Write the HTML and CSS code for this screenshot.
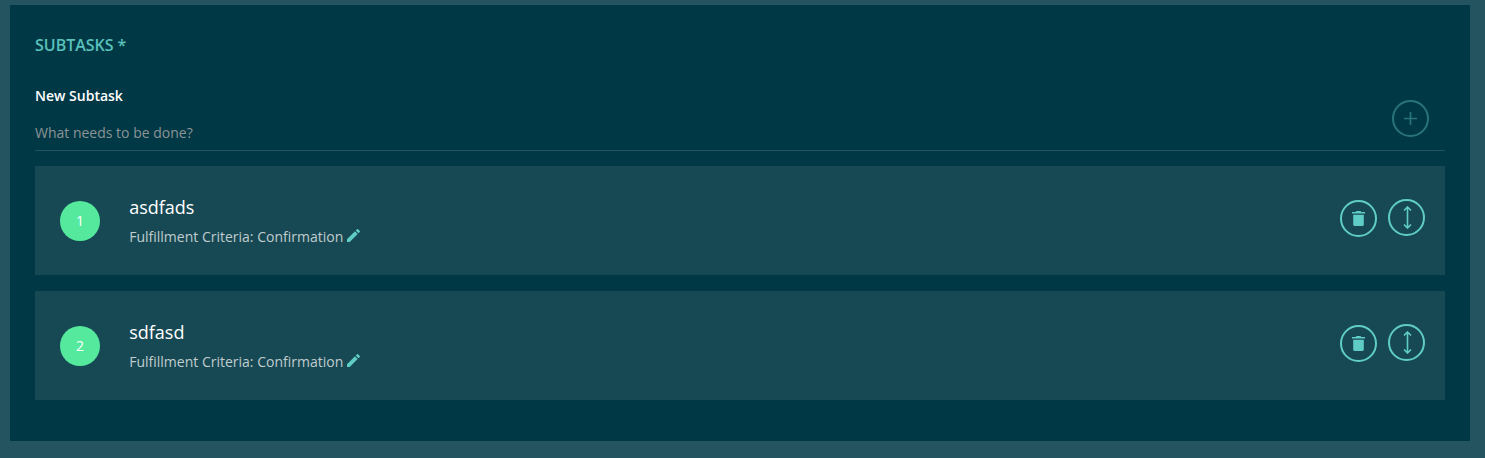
FILE: index.html
```html
<!DOCTYPE html>
<html lang="en">
<head>
<meta charset="utf-8">
<title>Subtasks</title>
<link rel="stylesheet" href="styles.css">
</head>
<body>
<main class="panel">
  <h2 class="title">SUBTASKS *</h2>
  <div class="new-task">
    <div class="field">
      <label class="label" for="new">New Subtask</label>
      <input class="input" id="new" type="text" placeholder="What needs to be done?">
    </div>
    <button class="round add" aria-label="Add"><svg width="13" height="13" viewBox="0 0 13 13"><path d="M6.500 0v13M0 6.500h13" stroke="currentColor" stroke-width="1.7"/></svg></button>
  </div>
  <section class="card">
    <span class="number">1</span>
    <div class="info">
      <div class="name">asdfads</div>
      <div class="criteria">Fulfillment Criteria: Confirmation<svg class="pencil" viewBox="3 3 18 18"><path d="M3 17.25V21h3.75L17.81 9.94l-3.75-3.75L3 17.25zM20.71 7.04a1 1 0 0 0 0-1.41l-2.34-2.34a1 1 0 0 0-1.41 0l-1.83 1.83 3.75 3.75 1.83-1.83z"/></svg></div>
    </div>
    <button class="round trash" aria-label="Delete"><svg width="13" height="15" viewBox="0 0 13 15"><path d="M4.500 0h4l.8 1H13v1.500H0V1h3.700zM1.200 3.700h10.600V13.500q0 1.500-1.500 1.500H2.700q-1.500 0-1.500-1.500z" fill="currentColor"/></svg></button>
    <button class="round move" aria-label="Move"><svg width="9" height="23" viewBox="0 0 9 23"><path d="M4.500 1v21M1 4.500L4.500 1 8 4.500M1 18.500L4.500 22 8 18.500" fill="none" stroke="currentColor" stroke-width="1.6"/></svg></button>
  </section>
  <section class="card">
    <span class="number">2</span>
    <div class="info">
      <div class="name">sdfasd</div>
      <div class="criteria">Fulfillment Criteria: Confirmation<svg class="pencil" viewBox="3 3 18 18"><path d="M3 17.25V21h3.75L17.81 9.94l-3.75-3.75L3 17.25zM20.71 7.04a1 1 0 0 0 0-1.41l-2.34-2.34a1 1 0 0 0-1.41 0l-1.83 1.83 3.75 3.75 1.83-1.83z"/></svg></div>
    </div>
    <button class="round trash" aria-label="Delete"><svg width="13" height="15" viewBox="0 0 13 15"><path d="M4.500 0h4l.8 1H13v1.500H0V1h3.700zM1.200 3.700h10.600V13.500q0 1.500-1.500 1.500H2.700q-1.500 0-1.500-1.500z" fill="currentColor"/></svg></button>
    <button class="round move" aria-label="Move"><svg width="9" height="23" viewBox="0 0 9 23"><path d="M4.500 1v21M1 4.500L4.500 1 8 4.500M1 18.500L4.500 22 8 18.500" fill="none" stroke="currentColor" stroke-width="1.6"/></svg></button>
  </section>
</main>
</body>
</html>
```
FILE: styles.css
```css
* { box-sizing: border-box; }
body {
  margin: 0;
  height: 458px;
  padding: 5px 15px 0 10px;
  overflow: hidden;
  background: #24545f;
  font-family: "Open Sans", "Noto Sans", sans-serif;
}
.panel {
  height: 436px;
  padding: 28px 25px 0;
  background: #013846;
}
.title {
  margin: 0;
  font-size: 16px;
  line-height: 24px;
  font-weight: 600;
  letter-spacing: -0.02px;
  color: #58c1ba;
}
.new-task {
  display: flex;
  height: 70px;
  margin: 24px 0 15px;
  border-bottom: 1px solid #24545f;
}
.field { flex: 1; }
.label {
  display: block;
  font-size: 14px;
  line-height: 20px;
  font-weight: 600;
  color: #fff;
  margin-top: 5px;
}
.input {
  display: block;
  width: 100%;
  height: 24px;
  margin-top: 15px;
  padding: 0;
  border: 0;
  outline: 0;
  background: transparent;
  font: 14px/24px "Open Sans", "Noto Sans", sans-serif;
}
.input::placeholder { color: #8b9495; opacity: 1; }
.round {
  display: flex;
  align-items: center;
  justify-content: center;
  flex: none;
  width: 37px;
  height: 37px;
  padding: 0;
  border: 2px solid currentColor;
  border-radius: 50%;
  background: transparent;
  color: #5fcdc6;
}
.add { margin: 19px 16px 0 0; color: #297478; }
.card {
  display: flex;
  align-items: flex-start;
  height: 109px;
  padding: 0 20px 0 25px;
  margin-bottom: 16px;
  background: #174954;
}
.number {
  width: 40px;
  height: 40px;
  margin-top: 35px;
  border-radius: 50%;
  background: #55e99d;
  color: #fff;
  font-size: 14px;
  line-height: 40px;
  text-align: center;
}
.info { flex: 1; margin: 28px 0 0 29.2px; }
.name { font-size: 18px; line-height: 27px; color: #fff; }
.criteria {
  display: flex;
  align-items: flex-start;
  margin-top: 5px;
  font-size: 14px;
  line-height: 21px;
  color: #c0cccd;
}
.pencil { width: 13px; height: 13px; margin: 3px 0 0 3.800px; fill: #5fcdc6; }
.trash { margin: 34px 11px 0 0; }
.move { margin-top: 33px; padding-left: 1px; }
```
